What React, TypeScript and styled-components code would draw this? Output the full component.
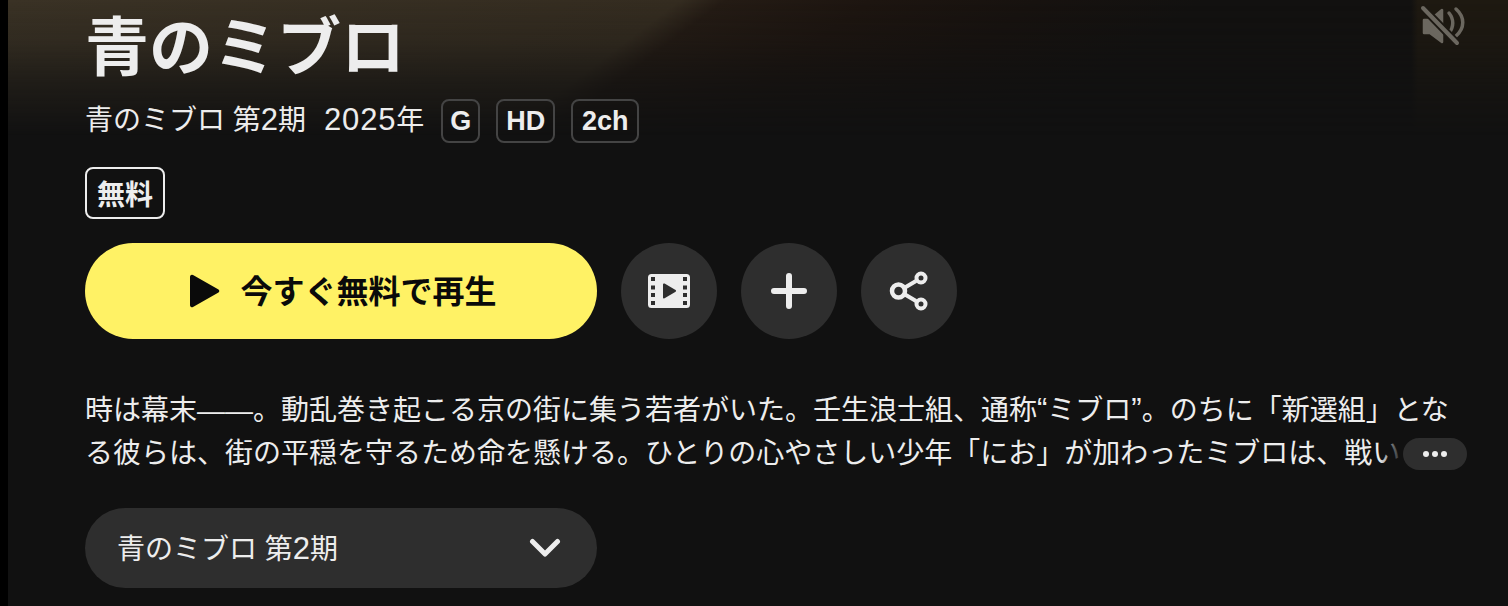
import React from "react";
import styled, { createGlobalStyle } from "styled-components";

const Global = createGlobalStyle`
  html, body { margin: 0; padding: 0; background: #000; }
  body { font-family: "Liberation Sans", "Noto Sans CJK JP", sans-serif; color: #ededed; overflow: hidden; }
`;

const Page = styled.main`
  position: relative;
  width: 1500px;
  height: 606px;
  margin-left: 8px;
  box-sizing: border-box;
  padding: 0 41px 0 77px;
  background: #111;
  overflow: hidden;
`;

const Hero = styled.div`
  position: absolute;
  inset: 0 0 auto 0;
  height: 140px;
  background:
    linear-gradient(90deg, rgba(30,25,17,0) 1403px, #1e1911 1410px),
    linear-gradient(143deg, #3a3225 0, #342c20 405px, #241b14 432px, #1d1510 520px, #17120f 620px, #121110 720px);
  -webkit-mask-image: linear-gradient(180deg, #000 0, rgba(0,0,0,.8) 40px, rgba(0,0,0,.35) 85px, transparent 135px);
  mask-image: linear-gradient(180deg, #000 0, rgba(0,0,0,.8) 40px, rgba(0,0,0,.35) 85px, transparent 135px);
`;

const Mute = styled.svg`
  position: absolute;
  top: 4px;
  right: 40px;
  width: 48px;
  height: 44px;
  color: #6b675f;
`;

const Content = styled.div`
  position: relative;
  display: flex;
  flex-direction: column;
  align-items: flex-start;
`;

const Title = styled.h1`
  margin: 9px 0 0;
  font-size: 64px;
  line-height: 78px;
  font-weight: 700;
  color: #ededed;
`;

const MetaRow = styled.div`
  display: flex;
  align-items: center;
  height: 44px;
  margin-top: 12px;
  font-size: 28px;
  line-height: 44px;
  white-space: nowrap;
`;

const MetaText = styled.span<{ $gap: number }>`
  margin-right: ${(p) => p.$gap}px;
`;

const Latin = styled.span<{ $tracking?: number }>`
  font-size: 31px;
  line-height: 0;
  letter-spacing: ${(p) => p.$tracking ?? 0}px;
`;

const Spec = styled.span<{ $width: number }>`
  display: inline-flex;
  align-items: center;
  justify-content: center;
  box-sizing: border-box;
  width: ${(p) => p.$width}px;
  height: 44px;
  margin-right: 16px;
  border: 2px solid #444;
  border-radius: 8px;
  font-size: 27px;
  font-weight: 700;
`;

const FreeTag = styled.span`
  display: inline-flex;
  align-items: center;
  justify-content: center;
  box-sizing: border-box;
  width: 80px;
  height: 52px;
  margin-top: 24px;
  border: 2px solid #ededed;
  border-radius: 8px;
  font-size: 28px;
  font-weight: 700;
`;

const Actions = styled.div`
  display: flex;
  gap: 24px;
  margin-top: 24px;
`;

const PlayButton = styled.button`
  display: flex;
  align-items: center;
  justify-content: center;
  gap: 20px;
  box-sizing: border-box;
  width: 512px;
  height: 96px;
  padding: 0 0 0 5px;
  border: 0;
  border-radius: 48px;
  background: #fff265;
  color: #0a0a0a;
  font: 700 32px "Liberation Sans", "Noto Sans CJK JP", sans-serif;
`;

const PlayLabel = styled.span`
  margin-top: -4px;
`;

const RoundButton = styled.button`
  display: flex;
  align-items: center;
  justify-content: center;
  width: 96px;
  height: 96px;
  padding: 0;
  border: 0;
  border-radius: 50%;
  background: #2e2e2e;
  color: #ededed;
`;

const Synopsis = styled.div`
  position: relative;
  width: 1382px;
  margin-top: 49px;
`;

const SynopsisText = styled.p`
  margin: 0;
  padding-top: 1px;
  font-size: 28px;
  line-height: 43px;
  height: 87px;
  overflow: hidden;
  white-space: nowrap;
  color: #ededed;
`;

const MoreWrap = styled.div`
  position: absolute;
  right: 0;
  bottom: 0;
  height: 44px;
  display: flex;
  align-items: center;
  padding-left: 24px;
  background: linear-gradient(90deg, rgba(17,17,17,0) 0, #111 24px);
`;

const MorePill = styled.span`
  display: flex;
  align-items: center;
  justify-content: center;
  gap: 3px;
  width: 64px;
  height: 32px;
  border-radius: 16px;
  background: #2e2e2e;
`;

const Dot = styled.i`
  width: 6px;
  height: 6px;
  border-radius: 50%;
  background: #ededed;
`;

const Season = styled.div`
  display: flex;
  align-items: center;
  justify-content: space-between;
  box-sizing: border-box;
  width: 512px;
  height: 80px;
  margin-top: 32px;
  padding: 0 36px 0 32px;
  border-radius: 40px;
  background: #2e2e2e;
  font-size: 28px;
`;

const SeasonLabel = styled.span`
  margin-top: -2px;
`;

export default function App() {
  return (
    <>
      <Global />
      <Page>
        <Hero />
        <Mute viewBox="0 0 48 44" fill="none">
          <path d="M4 16h6L22 6v32L10 29H4z" fill="currentColor" strokeLinejoin="round" stroke="currentColor" strokeWidth="2.500" />
          <path d="M29 9c5 6 5 14 0 20M36 5c9 8 9 19 0 27" stroke="currentColor" strokeWidth="3.500" strokeLinecap="round" />
          <path d="M3 4l34 35" stroke="#1c1812" strokeWidth="8" />
          <path d="M3 4l34 35" stroke="currentColor" strokeWidth="4" strokeLinecap="round" />
        </Mute>
        <Content>
          <Title>青のミブロ</Title>
          <MetaRow>
            <MetaText $gap={18}>
              青のミブロ 第<Latin>2</Latin>期
            </MetaText>
            <MetaText $gap={17}>
              <Latin $tracking={0.8}>2025</Latin>年
            </MetaText>
            <Spec $width={39}>G</Spec>
            <Spec $width={59}>HD</Spec>
            <Spec $width={68}>2ch</Spec>
          </MetaRow>
          <FreeTag>無料</FreeTag>
          <Actions>
            <PlayButton>
              <svg width="30" height="34" viewBox="0 0 30 34">
                <path d="M3 1 28.500 15.500a1.800 1.800 0 0 1 0 3L3 33a2 2 0 0 1-3-1.700V2.700A2 2 0 0 1 3 1z" fill="#0a0a0a" />
              </svg>
              <PlayLabel>今すぐ無料で再生</PlayLabel>
            </PlayButton>
            <RoundButton aria-label="予告編">
              <svg width="44" height="36" viewBox="0 0 44 36">
                <path
                  fillRule="evenodd"
                  fill="currentColor"
                  d="M4.500 1h35A3.500 3.500 0 0 1 43 4.500v27a3.500 3.500 0 0 1-3.500 3.500h-35A3.500 3.500 0 0 1 1 31.500v-27A3.500 3.500 0 0 1 4.500 1zM4 4v4h4V4zM4 12.500v4h4v-4zM4 20v4h4v-4zM4 28v4h4v-4zM36 4v4h4V4zM36 12.500v4h4v-4zM36 20v4h4v-4zM36 28v4h4v-4z"
                />
                <path d="M16 11.500c0-.8.9-1.300 1.600-.9l11 6.500c.6.400.6 1.300 0 1.700l-11 6.500c-.7.400-1.600-.1-1.600-.9z" fill="#2e2e2e" />
              </svg>
            </RoundButton>
            <RoundButton aria-label="追加">
              <svg width="48" height="48" viewBox="0 0 48 48">
                <path d="M24 9v30M9 24h30" stroke="currentColor" strokeWidth="6" strokeLinecap="round" />
              </svg>
            </RoundButton>
            <RoundButton aria-label="共有">
              <svg width="48" height="48" viewBox="0 0 48 48" fill="none" stroke="currentColor">
                <path d="M20 20.500 31 14M20 27.500 31 34" strokeWidth="4" />
                <circle cx="13.500" cy="24" r="6.500" strokeWidth="4.500" />
                <circle cx="36" cy="11" r="4.500" strokeWidth="4" />
                <circle cx="36" cy="37" r="4.500" strokeWidth="4" />
              </svg>
            </RoundButton>
          </Actions>
          <Synopsis>
            <SynopsisText>
              時は幕末——。動乱巻き起こる京の街に集う若者がいた。壬生浪士組、通称<Latin>“</Latin>ミブロ<Latin>”</Latin>。のちに「新選組」とな
              <br />
              る彼らは、街の平穏を守るため命を懸ける。ひとりの心やさしい少年「にお」が加わったミブロは、戦い
            </SynopsisText>
            <MoreWrap>
              <MorePill>
                <Dot />
                <Dot />
                <Dot />
              </MorePill>
            </MoreWrap>
          </Synopsis>
          <Season>
            <SeasonLabel>
              青のミブロ 第<Latin>2</Latin>期
            </SeasonLabel>
            <svg width="32" height="20" viewBox="0 0 32 20" fill="none">
              <path d="M3.500 3.500 16 16 28.500 3.500" stroke="#ededed" strokeWidth="5" strokeLinecap="round" strokeLinejoin="round" />
            </svg>
          </Season>
        </Content>
      </Page>
    </>
  );
}
